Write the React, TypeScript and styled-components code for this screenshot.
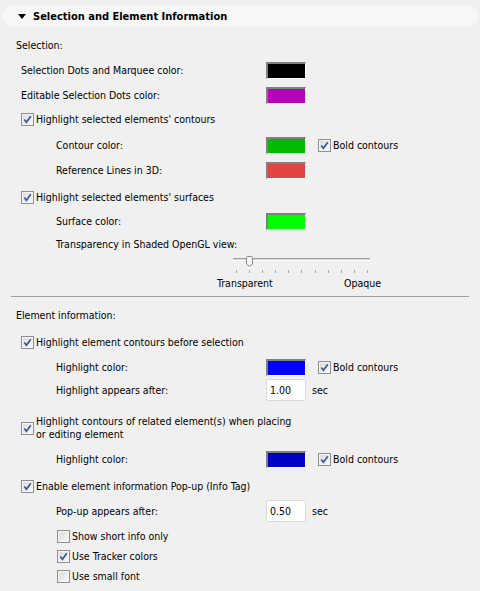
import React from "react";
import styled, { createGlobalStyle } from "styled-components";

const Global = createGlobalStyle`
  html, body { margin: 0; padding: 0; background: #f0f0f0; }
  body {
    font-family: "DejaVu Sans Condensed", "DejaVu Sans", sans-serif;
    font-size: 10.5px;
    color: #000;
  }
`;

const CONTROL_X = 266;

const Page = styled.div`
  width: 480px;
  height: 591px;
  overflow: hidden;
  background: #f0f0f0;
  padding-top: 5px;
  box-sizing: border-box;
`;

const Header = styled.div`
  margin: 0 2px 0 3px;
  height: 22px;
  border-radius: 11px;
  background: #f7f7f7;
  display: flex;
  align-items: center;
  padding-left: 15px;
  gap: 7px;
`;

const Arrow = styled.span`
  width: 0;
  height: 0;
  border-left: 4px solid transparent;
  border-right: 4px solid transparent;
  border-top: 5px solid #000;
`;

const Title = styled.span`
  font-weight: bold;
  font-size: 11px;
  white-space: nowrap;
`;

const Row = styled.div<{ $indent: number; $h?: number; $mt: number }>`
  display: flex;
  align-items: center;
  height: ${(p) => p.$h ?? 20}px;
  margin-top: ${(p) => p.$mt}px;
  padding-left: ${(p) => p.$indent}px;
`;

const Label = styled.span<{ $w?: number }>`
  white-space: nowrap;
  ${(p) => (p.$w ? `width: ${p.$w}px; flex: none;` : "")}
`;

const MultiLabel = styled.span`
  line-height: 13px;
`;

const Swatch = styled.span<{ $c: string }>`
  width: 40px;
  height: 17px;
  box-sizing: border-box;
  flex: none;
  background: ${(p) => p.$c};
  border-style: solid;
  border-width: 2px 1px 1px 2px;
  border-color: #808080 #ffffff #ffffff #808080;
`;

const BoxWrap = styled.label<{ $ml?: number }>`
  display: inline-flex;
  align-items: center;
  gap: 2px;
  margin-left: ${(p) => p.$ml ?? 0}px;
  white-space: nowrap;
`;

const Box = styled.span`
  width: 13px;
  height: 13px;
  box-sizing: border-box;
  flex: none;
  border: 1px solid #8e8f8f;
  background: linear-gradient(135deg, #d9d9d9 0%, #eeeeee 60%, #fafafa 100%);
  box-shadow: inset 0 0 0 1px #f4f4f4;
  display: inline-flex;
  align-items: center;
  justify-content: center;
`;

const Field = styled.input`
  width: 40px;
  height: 22px;
  box-sizing: border-box;
  flex: none;
  margin: 0;
  background: #fff;
  border: 1px solid #dadada;
  border-radius: 2px;
  padding: 0 0 0 3px;
  font-family: inherit;
  font-size: 10.5px;
  color: #000;
  outline: none;
`;

const Unit = styled.span`
  margin-left: 6px;
`;

const SliderBlock = styled.div`
  display: flex;
  flex-direction: column;
`;

const Track = styled.div`
  position: relative;
  margin: 4px 0 0 233px;
  width: 137px;
  height: 1px;
  background: #d8d8d8;
  border-top: 1px solid #a0a0a0;
  border-bottom: 1px solid #ffffff;
`;

const Thumb = styled.svg`
  position: absolute;
  left: 13px;
  top: -3px;
`;

const Ticks = styled.div`
  margin: 9px 0 0 236px;
  width: 132px;
  height: 3px;
  display: flex;
  justify-content: space-between;
`;

const Tick = styled.span`
  width: 1px;
  height: 3px;
  background: #a8a8a8;
`;

const ScaleLabels = styled.div`
  margin: 4px 0 0 217px;
  width: 164px;
  height: 13px;
  line-height: 13px;
  display: flex;
  justify-content: space-between;
`;

const Separator = styled.div`
  margin: 6px 0 0 11px;
  width: 458px;
  height: 1px;
  background: #a0a0a0;
`;

const Check = ({ on }: { on: boolean }) => (
  <Box>
    {on && (
      <svg width="9" height="9" viewBox="0 0 9 9">
        <path
          d="M1.3 4.6 L3.4 7.3 L7.8 1.2"
          fill="none"
          stroke="#3d57a3"
          strokeWidth="1.7"
          strokeLinejoin="miter"
        />
      </svg>
    )}
  </Box>
);

const CheckItem = ({ on, text, ml }: { on: boolean; text: React.ReactNode; ml?: number }) => (
  <BoxWrap $ml={ml}>
    <Check on={on} />
    <span>{text}</span>
  </BoxWrap>
);

const ColorRow = ({
  indent,
  mt,
  label,
  color,
  bold,
}: {
  indent: number;
  mt: number;
  label: string;
  color: string;
  bold?: boolean;
}) => (
  <Row $indent={indent} $mt={mt}>
    <Label $w={CONTROL_X - indent}>{label}</Label>
    <Swatch $c={color} />
    {bold && <CheckItem on text="Bold contours" ml={12} />}
  </Row>
);

const TimeRow = ({ indent, mt, label, value }: { indent: number; mt: number; label: string; value: string }) => (
  <Row $indent={indent} $mt={mt} $h={22}>
    <Label $w={CONTROL_X - indent}>{label}</Label>
    <Field readOnly value={value} />
    <Unit>sec</Unit>
  </Row>
);

export default function App() {
  return (
    <Page>
      <Global />
      <Header>
        <Arrow />
        <Title>Selection and Element Information</Title>
      </Header>

      <Row $indent={16} $mt={8}>
        <Label>Selection:</Label>
      </Row>
      <ColorRow indent={21} mt={5} label="Selection Dots and Marquee color:" color="#000000" />
      <ColorRow indent={21} mt={5} label="Editable Selection Dots color:" color="#b800b8" />
      <Row $indent={21} $mt={4}>
        <CheckItem on text="Highlight selected elements' contours" />
      </Row>
      <ColorRow indent={56} mt={6} label="Contour color:" color="#00bb00" bold />
      <ColorRow indent={56} mt={5} label="Reference Lines in 3D:" color="#e24444" />
      <Row $indent={21} $mt={7}>
        <CheckItem on text="Highlight selected elements' surfaces" />
      </Row>
      <ColorRow indent={56} mt={4} label="Surface color:" color="#00ff00" />
      <Row $indent={56} $mt={3}>
        <Label>Transparency in Shaded OpenGL view:</Label>
      </Row>
      <SliderBlock>
        <Track>
          <Thumb width="7" height="11" viewBox="0 0 7 11">
            <path
              d="M0.5 1.5 Q0.5 0.5 1.5 0.5 H5.5 Q6.5 0.5 6.5 1.5 V8 L3.5 10.5 L0.5 8 Z"
              fill="#f3f3f3"
              stroke="#8a8a8a"
              strokeWidth="1"
            />
          </Thumb>
        </Track>
        <Ticks>
          {Array.from({ length: 11 }).map((_, i) => (
            <Tick key={i} />
          ))}
        </Ticks>
        <ScaleLabels>
          <span>Transparent</span>
          <span>Opaque</span>
        </ScaleLabels>
      </SliderBlock>
      <Separator />

      <Row $indent={16} $mt={8}>
        <Label>Element information:</Label>
      </Row>
      <Row $indent={21} $mt={7}>
        <CheckItem on text="Highlight element contours before selection" />
      </Row>
      <ColorRow indent={56} mt={5} label="Highlight color:" color="#0000ff" bold />
      <TimeRow indent={56} mt={2} label="Highlight appears after:" value="1.00" />
      <Row $indent={21} $mt={13} $h={28}>
        <BoxWrap>
          <Check on />
          <MultiLabel>
            Highlight contours of related element(s) when placing
            <br />
            or editing element
          </MultiLabel>
        </BoxWrap>
      </Row>
      <ColorRow indent={56} mt={7} label="Highlight color:" color="#0000c4" bold />
      <Row $indent={21} $mt={7}>
        <CheckItem on text="Enable element information Pop-up (Info Tag)" />
      </Row>
      <TimeRow indent={56} mt={4} label="Pop-up appears after:" value="0.50" />
      <Row $indent={57} $mt={4}>
        <CheckItem on={false} text="Show short info only" />
      </Row>
      <Row $indent={57} $mt={0}>
        <CheckItem on text="Use Tracker colors" />
      </Row>
      <Row $indent={57} $mt={0}>
        <CheckItem on={false} text="Use small font" />
      </Row>
    </Page>
  );
}
